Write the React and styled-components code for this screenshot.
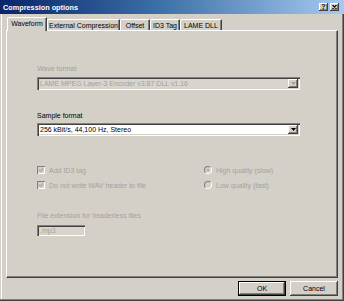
import React from "react";
import styled, { createGlobalStyle, css } from "styled-components";

const Global = createGlobalStyle`
  html, body { margin: 0; padding: 0; background: #d4d0c8; }
  body { font-family: "Liberation Sans", Arial, sans-serif; }
`;

const BG = "#d4d0c8";
const GREY = "#a5a19a";

const Window = styled.div`
  width: 344px;
  height: 301px;
  display: flex;
  flex-direction: column;
  background: ${BG};
  font-family: "Liberation Sans", Arial, sans-serif;
  font-size: 7px;
  color: #000;
  overflow: hidden;
`;

const TitleBar = styled.div`
  height: 14px;
  flex: none;
  display: flex;
  align-items: center;
  justify-content: space-between;
  padding: 0 5px 0 3px;
  background: linear-gradient(to right, #0a246a 0%, #3a6ea5 45%, #a6caf0 100%);
`;

const TitleText = styled.span`
  color: #fff;
  font-weight: bold;
  font-size: 7.3px;
`;

const CaptionButtons = styled.div`
  display: flex;
  gap: 2px;
`;

const CaptionButton = styled.div`
  width: 9px;
  height: 8px;
  background: ${BG};
  box-shadow: inset -1px -1px 0 #404040, inset 1px 1px 0 #fff, inset -2px -2px 0 #808080;
  display: flex;
  align-items: center;
  justify-content: center;
  font-weight: bold;
  font-size: 7px;
  line-height: 8px;
  color: #000;
`;

const Frame = styled.div`
  flex: 1;
  display: flex;
  flex-direction: column;
  padding: 3px 6px 5px 6px;
  box-shadow: inset -1px -1px 0 #404040, inset -2px -2px 0 #808080, inset 1px 0 0 ${BG}, inset 2px 0 0 #fff;
`;

const TabStrip = styled.div`
  display: flex;
  align-items: flex-end;
  height: 14px;
  padding-left: 1px;
  position: relative;
  z-index: 1;
`;

const Tab = styled.div`
  width: ${(p) => p.$w}px;
  box-sizing: border-box;
  height: ${(p) => (p.$active ? 14 : 11)}px;
  margin-bottom: ${(p) => (p.$active ? 0 : 1)}px;
  background: ${BG};
  border-top: 1px solid #fff;
  border-left: 1px solid #fff;
  border-right: 1px solid #404040;
  border-top-left-radius: 2px;
  border-top-right-radius: 1px;
  box-shadow: inset -1px 0 0 #808080;
  display: flex;
  align-items: center;
  justify-content: center;
  white-space: nowrap;
  padding-bottom: ${(p) => (p.$active ? 3 : 0)}px;
`;

const Panel = styled.div`
  flex: 1;
  margin-top: -1px;
  border-top: 1px solid #fff;
  border-left: 1px solid #fff;
  border-right: 1px solid #404040;
  border-bottom: 1px solid #404040;
  box-shadow: inset -1px -1px 0 #808080;
  display: flex;
  flex-direction: column;
  padding: 33px 0 0 30px;
`;

const FieldLabel = styled.div`
  line-height: 9px;
  color: ${(p) => (p.$disabled ? GREY : "#000")};
  margin-top: ${(p) => p.$mt || 0}px;
`;

const Combo = styled.div`
  width: 263px;
  height: 13px;
  box-sizing: border-box;
  margin-top: ${(p) => p.$mt || 0}px;
  display: flex;
  align-items: center;
  background: ${(p) => (p.$disabled ? "#d8d5ce" : "#fff")};
  box-shadow: inset 1px 1px 0 #808080, inset 2px 2px 0 #404040, inset -1px -1px 0 #fff, inset -2px -2px 0 ${BG};
  padding: 2px 2px 2px 3px;
  color: ${(p) => (p.$disabled ? GREY : "#000")};
`;

const ComboText = styled.span`
  flex: 1;
  white-space: nowrap;
  overflow: hidden;
`;

const DropButton = styled.div`
  width: 10px;
  height: 9px;
  background: ${BG};
  box-shadow: inset -1px -1px 0 #404040, inset 1px 1px 0 #fff, inset -2px -2px 0 #808080;
  display: flex;
  align-items: center;
  justify-content: center;
`;

const OptionsGrid = styled.div`
  margin-top: 30px;
  display: grid;
  grid-template-columns: 167px 1fr;
  row-gap: 7px;
`;

const Option = styled.div`
  display: flex;
  align-items: center;
  gap: 4px;
  height: 8px;
  color: ${GREY};
  white-space: nowrap;
`;

const CheckBox = styled.div`
  width: 8px;
  height: 8px;
  flex: none;
  box-sizing: border-box;
  background: ${BG};
  box-shadow: inset 1px 1px 0 #808080, inset -1px -1px 0 #fff;
  display: flex;
  align-items: center;
  justify-content: center;
`;

const Radio = styled.div`
  width: 8px;
  height: 8px;
  flex: none;
  border-radius: 50%;
  box-sizing: border-box;
  background: ${BG};
  border: 1px solid;
  border-color: #808080 #fff #fff #808080;
  display: flex;
  align-items: center;
  justify-content: center;
`;

const RadioDot = styled.div`
  width: 2px;
  height: 2px;
  border-radius: 50%;
  background: ${GREY};
`;

const EditBox = styled.div`
  width: 48px;
  height: 11px;
  box-sizing: border-box;
  margin-top: 5px;
  background: #d8d5ce;
  box-shadow: inset 1px 1px 0 #808080, inset 2px 2px 0 #404040, inset -1px -1px 0 #fff, inset -2px -2px 0 ${BG};
  padding: 0 3px;
  line-height: 11px;
  color: ${GREY};
`;

const ButtonRow = styled.div`
  display: flex;
  justify-content: flex-end;
  gap: 4px;
  margin-top: 3px;
`;

const PushButton = styled.div`
  width: 48px;
  height: 15px;
  box-sizing: border-box;
  background: ${BG};
  display: flex;
  align-items: center;
  justify-content: center;
  box-shadow: inset -1px -1px 0 #404040, inset 1px 1px 0 #fff, inset -2px -2px 0 #808080;
  ${(p) =>
    p.$default &&
    css`
      border: 1px solid #000;
    `}
`;

const Arrow = ({ color = "#000" }) => (
  <svg width="5" height="3" viewBox="0 0 5 3">
    <path d="M0 0H5L2.5 3Z" fill={color} />
  </svg>
);

const Check = () => (
  <svg width="6" height="6" viewBox="0 0 7 7">
    <path d="M1 3L3 5L6 1.5" stroke={GREY} strokeWidth="1.3" fill="none" />
  </svg>
);

const tabs = [
  { label: "Waveform", w: 40, active: true },
  { label: "External Compression", w: 73 },
  { label: "Offset", w: 30 },
  { label: "ID3 Tag", w: 30 },
  { label: "LAME DLL", w: 42 },
];

export default function App() {
  return (
    <>
      <Global />
      <Window>
        <TitleBar>
          <TitleText>Compression options</TitleText>
          <CaptionButtons>
            <CaptionButton>?</CaptionButton>
            <CaptionButton>
              <svg width="5" height="4" viewBox="0 0 5 4">
                <path d="M0.5 0L4.5 4M4.5 0L0.5 4" stroke="#000" strokeWidth="1.1" />
              </svg>
            </CaptionButton>
          </CaptionButtons>
        </TitleBar>
        <Frame>
          <TabStrip>
            {tabs.map((t) => (
              <Tab key={t.label} $w={t.w} $active={t.active}>
                {t.label}
              </Tab>
            ))}
          </TabStrip>
          <Panel>
            <FieldLabel $disabled>Wave format</FieldLabel>
            <Combo $disabled $mt={4}>
              <ComboText>LAME MPEG Layer-3 Encoder v3.87 DLL v1.16</ComboText>
              <DropButton>
                <Arrow color={GREY} />
              </DropButton>
            </Combo>
            <FieldLabel $mt={21}>Sample format</FieldLabel>
            <Combo $mt={3}>
              <ComboText>256 kBit/s, 44,100 Hz, Stereo</ComboText>
              <DropButton>
                <Arrow />
              </DropButton>
            </Combo>
            <OptionsGrid>
              <Option>
                <CheckBox>
                  <Check />
                </CheckBox>
                Add ID3 tag
              </Option>
              <Option>
                <Radio>
                  <RadioDot />
                </Radio>
                High quality (slow)
              </Option>
              <Option>
                <CheckBox>
                  <Check />
                </CheckBox>
                Do not write WAV header to file
              </Option>
              <Option>
                <Radio />
                Low quality (fast)
              </Option>
            </OptionsGrid>
            <FieldLabel $disabled $mt={22}>
              File extension for headerless files
            </FieldLabel>
            <EditBox>.mp3</EditBox>
          </Panel>
          <ButtonRow>
            <PushButton $default>OK</PushButton>
            <PushButton>Cancel</PushButton>
          </ButtonRow>
        </Frame>
      </Window>
    </>
  );
}
